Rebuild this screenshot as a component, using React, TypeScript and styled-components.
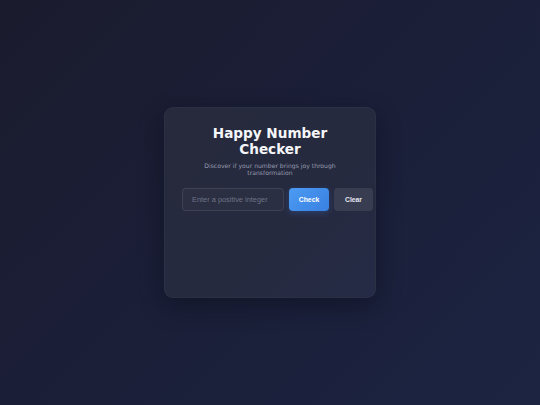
import React, { useState } from 'react';
import styled, { createGlobalStyle } from 'styled-components';

const GlobalStyle = createGlobalStyle`
  html, body {
    margin: 0;
    padding: 0;
    height: 100%;
  }
  body {
    background: linear-gradient(135deg, #1a1b2d 0%, #1b1f38 50%, #1c2442 100%);
    font-family: "DejaVu Sans", sans-serif;
  }
  #root {
    height: 100%;
  }
`;

const Page = styled.main`
  height: 100vh;
  display: flex;
  align-items: center;
  justify-content: center;
`;

const Card = styled.section`
  box-sizing: border-box;
  width: 212px;
  min-height: 191px;
  padding: 17px 17px;
  border-radius: 9px;
  background: linear-gradient(135deg, #272a3c 0%, #262a3f 60%, #252b46 100%);
  border: 1px solid rgba(255, 255, 255, 0.03);
  box-shadow: 0 8px 24px rgba(8, 10, 22, 0.45);
`;

const Title = styled.h1`
  margin: 0;
  text-align: center;
  color: #f5f6fa;
  font-family: "DejaVu Sans", sans-serif;
  font-weight: 700;
  font-size: 13.6px;
  line-height: 16px;
`;

const Subtitle = styled.p`
  margin: 5px 0 12px;
  text-align: center;
  color: #969bae;
  font-family: "DejaVu Sans", sans-serif;
  font-size: 6.1px;
  line-height: 7px;
`;

const Row = styled.div`
  display: flex;
  gap: 5px;
  width: 191px;
`;

const Input = styled.input`
  box-sizing: border-box;
  width: 102px;
  height: 23px;
  padding: 0 9px;
  border-radius: 4px;
  border: 1px solid rgba(255, 255, 255, 0.09);
  background: rgba(255, 255, 255, 0.025);
  color: #e5e7eb;
  font-family: "Liberation Sans", Arial, sans-serif;
  font-size: 7.4px;
  outline: none;

  &::placeholder {
    color: #6e7386;
  }
`;

const Button = styled.button<{ $primary?: boolean }>`
  box-sizing: border-box;
  width: ${(p) => (p.$primary ? '40px' : '39px')};
  height: 23px;
  border: none;
  border-radius: 4px;
  cursor: pointer;
  font-family: "Liberation Sans", Arial, sans-serif;
  font-weight: 700;
  font-size: 6.8px;
  color: ${(p) => (p.$primary ? '#ffffff' : '#e6e8ef')};
  background: ${(p) =>
    p.$primary ? 'linear-gradient(135deg, #4b9bf2 0%, #3a80e2 100%)' : '#393d52'};
  box-shadow: ${(p) => (p.$primary ? '0 2px 6px rgba(59, 130, 246, 0.25)' : 'none')};
`;

const App: React.FC = () => {
  const [value, setValue] = useState('');

  return (
    <>
      <GlobalStyle />
      <Page>
        <Card>
          <Title>Happy Number Checker</Title>
          <Subtitle>Discover if your number brings joy through transformation</Subtitle>
          <Row>
            <Input
              type="text"
              placeholder="Enter a positive integer"
              value={value}
              onChange={(e) => setValue(e.target.value)}
            />
            <Button $primary>Check</Button>
            <Button onClick={() => setValue('')}>Clear</Button>
          </Row>
        </Card>
      </Page>
    </>
  );
};

export default App;
